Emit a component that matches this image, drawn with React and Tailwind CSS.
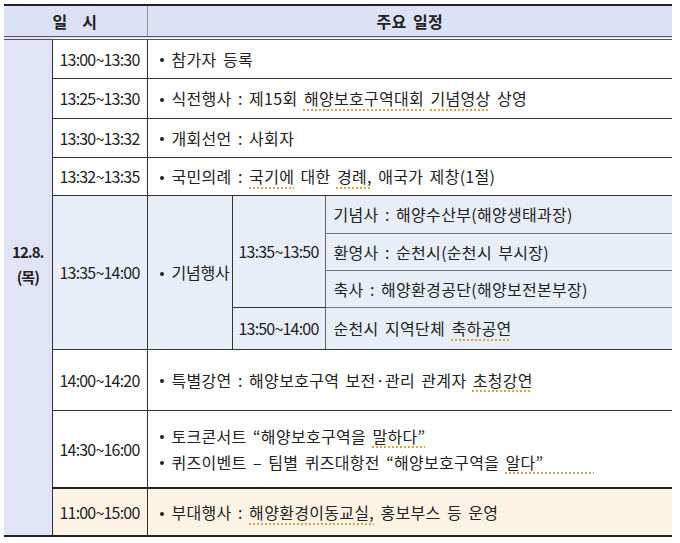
const U = ({ children }) => (
  <span className="underline decoration-dotted decoration-[#d9a441] decoration-[1.5px] underline-offset-[4px]">
    {children}
  </span>
);

const Dot = () => (
  <span className="inline-block w-[4px] h-[4px] rounded-full bg-[#222] mr-[8px] align-middle relative top-[-1px]" />
);

export default function App() {
  const line = "border-[#333]";
  return (
    <div
      className="w-[680px] h-[543px] bg-white pt-[4px] pl-[4px]"
      style={{ fontFamily: '"Noto Sans CJK KR", "Noto Sans", sans-serif' }}
    >
      <table className="table-fixed border-collapse w-[668px] text-[16px] text-[#222] leading-[22px] tracking-[0.3px] [word-spacing:2.5px]">
        <colgroup>
          <col className="w-[48px]" />
          <col className="w-[95px]" />
          <col className="w-[85px]" />
          <col className="w-[93px]" />
          <col />
        </colgroup>
        <thead>
          <tr className="h-[33px] bg-[#dce1f5]">
            <th
              colSpan={2}
              className="border-t-2 border-t-[#222] border-b-4 border-double border-b-[#555] border-r border-r-[#999] font-bold text-center tracking-[1px]"
            >
              일&nbsp;&nbsp;시
            </th>
            <th
              colSpan={3}
              className="border-t-2 border-t-[#222] border-b-4 border-double border-b-[#555] font-bold text-center"
            >
              주요 일정
            </th>
          </tr>
        </thead>
        <tbody>
          <tr className="h-[40px]">
            <td
              rowSpan={11}
              className={`bg-[#e1e4f6] border-r border-b-2 border-r-[#333] border-b-[#222] text-center align-middle pb-[48px] font-bold text-[15px] leading-[25px] tracking-[-1px]`}
            >
              <div>12.8.</div>
              <div>(목)</div>
            </td>
            <td className={`border ${line} text-center tracking-[-0.8px]`}>13:00~13:30</td>
            <td colSpan={3} className={`border-y border-l ${line} pl-[12px]`}>
              <Dot />참가자 등록
            </td>
          </tr>
          <tr className="h-[40px]">
            <td className={`border ${line} text-center tracking-[-0.8px]`}>13:25~13:30</td>
            <td colSpan={3} className={`border-y border-l ${line} pl-[12px]`}>
              <Dot />식전행사 : 제15회 <U>해양보호구역대회</U> <U>기념영상</U> 상영
            </td>
          </tr>
          <tr className="h-[39px]">
            <td className={`border ${line} text-center tracking-[-0.8px]`}>13:30~13:32</td>
            <td colSpan={3} className={`border-y border-l ${line} pl-[12px]`}>
              <Dot />개회선언 : 사회자
            </td>
          </tr>
          <tr className="h-[38px]">
            <td className={`border ${line} text-center tracking-[-0.8px]`}>13:32~13:35</td>
            <td colSpan={3} className={`border-y border-l ${line} pl-[12px]`}>
              <Dot />국민의례 : <U>국기에</U> 대한 <U>경례,</U> 애국가 제창(1절)
            </td>
          </tr>
          <tr className="h-[38px] bg-[#e7eef8]">
            <td rowSpan={4} className={`border ${line} text-center tracking-[-0.8px]`}>13:35~14:00</td>
            <td rowSpan={4} className={`border ${line} pl-[12px] whitespace-nowrap tracking-[-0.2px]`}>
              <Dot />기념행사
            </td>
            <td rowSpan={3} className="border border-[#333] border-r-[#666] text-center tracking-[-0.8px]">
              13:35~13:50
            </td>
            <td className="border-t border-t-[#333] border-b border-b-[#777] border-l border-l-[#666] pl-[8px]">
              기념사 : 해양수산부(해양생태과장)
            </td>
          </tr>
          <tr className="h-[37px] bg-[#e7eef8]">
            <td className="border-y border-[#777] border-l border-l-[#666] pl-[8px]">
              환영사 : 순천시(순천시 부시장)
            </td>
          </tr>
          <tr className="h-[37px] bg-[#e7eef8]">
            <td className="border-y border-[#777] border-l border-l-[#666] pl-[8px]">
              축사 : 해양환경공단(해양보전본부장)
            </td>
          </tr>
          <tr className="h-[42px] bg-[#e7eef8]">
            <td className="border border-[#333] border-r-[#666] text-center tracking-[-0.8px]">13:50~14:00</td>
            <td className="border-t border-t-[#777] border-b border-b-[#333] border-l border-l-[#666] pl-[8px]">
              순천시 지역단체 <U>축하공연</U>
            </td>
          </tr>
          <tr className="h-[61px]">
            <td className={`border ${line} text-center tracking-[-0.8px]`}>14:00~14:20</td>
            <td colSpan={3} className={`border-y border-l ${line} pl-[12px]`}>
              <Dot />특별강연 : 해양보호구역 보전·관리 관계자 <U>초청강연</U>
            </td>
          </tr>
          <tr className="h-[78px]">
            <td className={`border ${line} text-center tracking-[-0.8px]`}>14:30~16:00</td>
            <td colSpan={3} className={`border-t border-l border-b-2 border-[#333] border-b-[#222] pl-[12px] leading-[26px]`}>
              <div>
                <Dot />토크콘서트 “해양보호구역을 <U>말하다”</U>
              </div>
              <div>
                <Dot />퀴즈이벤트 – 팀별 퀴즈대항전 “해양보호구역을 <U>알다”&nbsp;&nbsp;&nbsp;&nbsp;&nbsp;&nbsp;&nbsp;&nbsp;</U>
              </div>
            </td>
          </tr>
          <tr className="h-[48px] bg-[#fdf3e5]">
            <td className="border-t-2 border-t-[#222] border-b-2 border-b-[#222] border-x border-x-[#333] text-center tracking-[-0.8px]">
              11:00~15:00
            </td>
            <td colSpan={3} className="border-t-2 border-t-[#222] border-b-2 border-b-[#222] border-l border-l-[#333] pl-[12px]">
              <Dot />부대행사 : <U>해양환경이동교실,</U> 홍보부스 등 운영
            </td>
          </tr>
        </tbody>
      </table>
    </div>
  );
}
